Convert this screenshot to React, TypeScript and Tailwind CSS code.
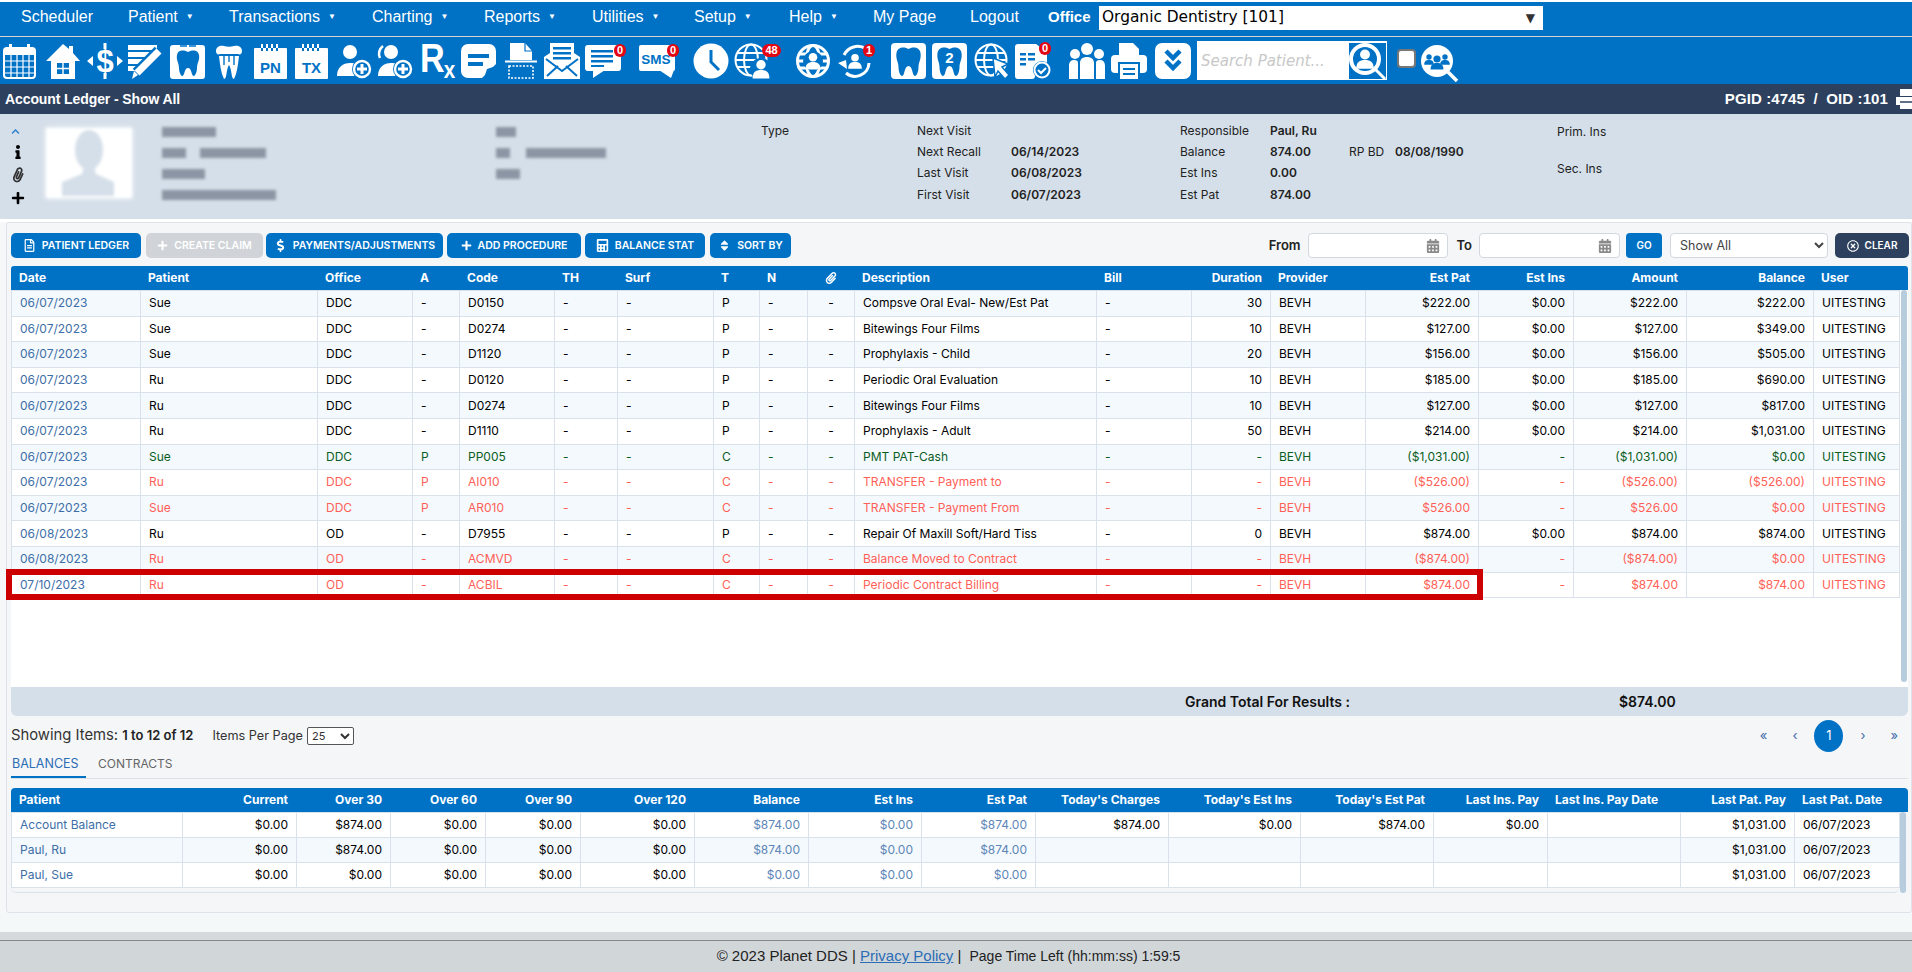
import React from "react";
import { FaCalendarAlt, FaCalculator, FaChevronUp, FaDollarSign, FaInfo, FaPaperclip, FaPlus, FaRegFileAlt, FaRegTimesCircle, FaSort } from "react-icons/fa";

const B = "#0072c6";
const TOOTH =
  "M18 9c-3-2-10-3-11 3-1 5 2 8 2 13 0 4 2 8 3 8 3 0 2-8 6-8s3 8 6 8c1 0 3-4 3-8 0-5 3-8 2-13-1-6-8-5-11-3z";
const BIG_TOOTH =
  "M17.500 6c-3-2-11-3-12 4-1 6 2 9 2 14 0 5 2 9 3.500 9 3 0 2-10 6.500-10s3.500 10 6.500 10c1.500 0 3.500-4 3.500-9 0-5 3-8 2-14-1-7-9-6-12-4z";

const Svg = ({ children, w = 36, className = "" }: { children: React.ReactNode; w?: number; className?: string }) => (
  <svg viewBox={`0 0 ${w} 36`} width={w} height={36} className={"shrink-0 overflow-visible " + className} fill="white">
    {children}
  </svg>
);

const Person = ({ x, y, s = 1, c = "white" }: { x: number; y: number; s?: number; c?: string }) => (
  <g transform={`translate(${x} ${y}) scale(${s})`} fill={c}>
    <circle cx="0" cy="-5" r="4.500" />
    <path d="M-8 8c0-6 3-8 8-8s8 2 8 8z" />
  </g>
);

const Globe = ({ sw = 2 }: { sw?: number }) => (
  <g fill="none" stroke="white" strokeWidth={sw}>
    <circle cx="17" cy="17" r="15.500" />
    <ellipse cx="17" cy="17" rx="7" ry="15.500" />
    <path d="M3 10h28M1.500 17h31M3 24h28" />
  </g>
);

const AddUser = ({ ghost }: { ghost?: boolean }) => (
  <Svg>
    <circle cx="14" cy="9" r="7" />
    <path d="M1 33c0-9 6-13 13-13 5 0 8 2 10 5l-6 8z" />
    {ghost && <path d="M6 3C2 6 1 11 3 15" fill="none" stroke="white" strokeWidth="2.500" />}
    <circle cx="26" cy="26" r="10" fill={B} />
    <circle cx="26" cy="26" r="8" fill={B} stroke="white" strokeWidth="2.400" />
    <path d="M26 21v10M21 26h10" stroke="white" strokeWidth="3" />
  </Svg>
);

const Dated = ({ label }: { label: string }) => (
  <Svg w={33}>
    <rect x="0" y="5" width="33" height="31" rx="1" />
    <path d="M8 1v7M13 1v7M18 1v7M23 1v7" stroke={B} strokeWidth="2" />
    <path d="M8 1v4M13 1v4M18 1v4M23 1v4" stroke="white" strokeWidth="2" />
    <text x="16.500" y="30" textAnchor="middle" fontSize="15" fontWeight="700" fill={B} fontFamily="'Liberation Sans',sans-serif">{label}</text>
  </Svg>
);

const Badge = ({ n, className }: { n: string; className: string }) => (
  <span className={"absolute flex h-[13px] items-center justify-center rounded-full bg-[#e30613] text-[11px] font-bold leading-none text-white font-['Liberation_Sans',sans-serif] " + className}>
    {n}
  </span>
);

const IconBar = () => (
  <div className="flex h-[47px] items-center bg-[#0072c6] pl-[3px]">
    {/* calendar */}
    <Svg w={33}>
      <rect x="1" y="5" width="31" height="30" rx="3" fill="none" stroke="white" strokeWidth="2" />
      <rect x="1" y="5" width="31" height="7" />
      <rect x="6" y="1" width="3" height="7" />
      <rect x="24" y="1" width="3" height="7" />
      <path d="M8 12v22M14 12v22M20 12v22M26 12v22M2 18h29M2 24h29M2 30h29" stroke="white" strokeWidth="1.200" />
    </Svg>
    {/* home */}
    <Svg className="ml-[9px]">
      <path d="M18 1l6 5V3h4v7l7 8h-5v18H6V18H1z" />
      <rect x="12" y="20" width="12" height="11" fill={B} />
      <path d="M18 20v11M12 25.500h12" stroke="white" strokeWidth="1.400" />
    </Svg>
    {/* money */}
    <Svg className="ml-[6px]">
      <path d="M18 0v6M18 30v6" stroke="white" strokeWidth="3" />
      <text x="18" y="29" textAnchor="middle" fontSize="31" fontWeight="700" fontFamily="'Liberation Sans',sans-serif">$</text>
      <path d="M0 18l6-5v10zM36 18l-6-5v10z" />
    </Svg>
    {/* sheet and pencil */}
    <Svg className="ml-[5px]">
      <path d="M0 2h29v5H0zM0 9h29v5H0zM0 16h20v5H0zM0 23h12v5H0z" />
      <path d="M9 30L31 8" stroke={B} strokeWidth="12" />
      <path d="M9 30L31 8" stroke="white" strokeWidth="7" />
      <path d="M6 28l2 2 2 2-6 4z" />
    </Svg>
    {/* tooth chart */}
    <Svg className="ml-[6px]">
      <rect x="0" y="2" width="35" height="34" rx="3" />
      <path d="M10 3h7M19 3h7" stroke={B} strokeWidth="1.500" />
      <path d={TOOTH} fill={B} />
    </Svg>
    {/* crown */}
    <Svg w={28} className="ml-[9px]">
      <path d="M1 8C1 3 6 2 9 3c3 1 7 1 10 0 3-1 8 0 8 5 0 3-2 4-4 3H5c-2 1-4 0-4-3z" />
      <path d="M4 13h20c-1 9-2 17-5 23-3 0-2-10-5-14-3 4-2 14-5 14-3-6-4-14-5-23z" />
      <path d="M9 13v9M14 13v6M19 13v9" stroke={B} strokeWidth="1.400" />
    </Svg>
    <span className="ml-[11px] flex"><Dated label="PN" /></span>
    <span className="ml-[8px] flex"><Dated label="TX" /></span>
    <span className="ml-[8px] flex"><AddUser /></span>
    <span className="ml-[5px] flex"><AddUser ghost /></span>
    {/* rx */}
    <Svg w={33} className="ml-[7px]">
      <text transform="translate(0 29) scale(0.900 1.050)" fontSize="38" fontWeight="700" fontFamily="'Liberation Sans',sans-serif">
        R<tspan dx="-1" dy="6" fontSize="23">x</tspan>
      </text>
    </Svg>
    {/* note */}
    <Svg className="ml-[8px]">
      <path d="M7 1h21a7 7 0 017 7v13L21 35H7a7 7 0 01-7-7V8a7 7 0 017-7z" />
      <path d="M7 11h21v4H7zM7 19h15v4H7zM26 26l9-3-12 12z" fill={B} />
    </Svg>
    {/* scan */}
    <Svg w={32} className="ml-[8px]">
      <path d="M5 0h15l7 8v9H5z" />
      <path d="M20 0v8h7" fill="none" stroke={B} strokeWidth="1.200" />
      <path d="M0 18.500h32" stroke="white" strokeWidth="2" />
      <rect x="4" y="23" width="24" height="12" fill="none" stroke="white" strokeWidth="1.600" strokeDasharray="2 1.500" />
    </Svg>
    {/* mail */}
    <Svg className="ml-[7px]">
      <path d="M0 14l6-4V0h24v10l6 4v22H0z" />
      <path d="M9 4h18v2.500H9zM9 9h18v2.500H9zM9 14h18v2.500H9z" fill={B} />
      <path d="M2 16l16 12 16-12M3 33l11-10M33 33L22 23" fill="none" stroke={B} strokeWidth="2" />
    </Svg>
    {/* chat */}
    <span className="relative ml-[5px] flex">
      <Svg>
        <rect x="0" y="2" width="36" height="26" rx="3" />
        <path d="M8 27h12L8 35z" />
        <path d="M6 7h22v2.400H6zM6 12h22v2.400H6zM6 17h22v2.400H6zM6 22h13v2H6z" fill={B} />
      </Svg>
      <Badge n="0" className="left-[29px] top-[1px] w-[12px]" />
    </span>
    {/* sms */}
    <span className="relative ml-[18px] flex">
      <Svg>
        <rect x="0" y="2" width="36" height="26" rx="2" />
        <path d="M20 27h15l-3 8z" />
        <text x="17" y="21" textAnchor="middle" fontSize="13.500" fontWeight="700" fill={B} fontFamily="'Liberation Sans',sans-serif">SMS</text>
      </Svg>
      <Badge n="0" className="left-[28px] top-[1px] w-[12px]" />
    </span>
    {/* clock */}
    <Svg className="ml-[18px]">
      <circle cx="18" cy="18" r="17.500" />
      <path d="M18 7v12l8 8" fill="none" stroke={B} strokeWidth="3" />
    </Svg>
    {/* web patients */}
    <span className="relative ml-[5px] flex">
      <Svg>
        <Globe />
        <circle cx="27" cy="26" r="11" fill={B} />
        <Person x={27} y={27} s={1.050} />
      </Svg>
      <Badge n="48" className="left-[28px] top-[1px] w-[19px]" />
    </span>
    {/* globe person */}
    <Svg className="ml-[25px]">
      <g transform="translate(1 1)"><Globe sw={3} /></g>
      <circle cx="18" cy="18" r="10" fill={B} />
      <Person x={18} y={19} s={0.950} />
    </Svg>
    {/* recare */}
    <span className="relative ml-[7px] flex">
      <Svg>
        <path d="M6 12A15 15 0 0128 6" fill="none" stroke="white" strokeWidth="3" />
        <path d="M31 20A14 14 0 018 30" fill="none" stroke="white" strokeWidth="3" />
        <path d="M0 20l8-3 1 9zM33 14l3-7-8 1z" />
        <Person x={17} y={19} s={0.850} />
      </Svg>
      <Badge n="1" className="left-[25px] top-[1px] w-[12px]" />
    </span>
    {/* teeth */}
    <Svg className="ml-[17px]">
      <rect x="0" y="0" width="35" height="36" rx="4" />
      <path d={BIG_TOOTH} fill={B} />
    </Svg>
    <Svg className="ml-[5px]">
      <rect x="0" y="0" width="35" height="36" rx="4" />
      <path d={BIG_TOOTH} fill={B} />
      <text x="17.500" y="20" textAnchor="middle" fontSize="15" fontWeight="700" fontFamily="'Liberation Sans',sans-serif">2</text>
    </Svg>
    {/* globe cursor */}
    <Svg className="ml-[6px]">
      <Globe />
      <path d="M19 15l15 6-6 3 7 8-4 4-7-8-3 6z" stroke={B} strokeWidth="1.500" />
    </Svg>
    {/* doc check */}
    <span className="relative ml-[5px] flex">
      <Svg>
        <path d="M3 1h18l11 8v17H3a3 3 0 01-3-3V4a3 3 0 013-3z" />
        <rect x="0" y="20" width="20" height="16" rx="3" />
        <path d="M5 10h6v2.500H5zM13 10h7v2.500h-7zM5 15h6v2.500H5zM13 15h7v2.500h-7zM5 20h6v2.500H5z" fill={B} />
        <circle cx="27" cy="27" r="9" fill={B} />
        <circle cx="27" cy="27" r="7.500" fill={B} stroke="white" strokeWidth="2" />
        <path d="M23 27l3 3 5-5" fill="none" stroke="white" strokeWidth="2" />
      </Svg>
      <Badge n="0" className="left-[24px] top-[-1px] w-[12px]" />
    </span>
    {/* people */}
    <Svg className="ml-[18px]">
      <circle cx="18" cy="6" r="6" />
      <circle cx="6" cy="11" r="5" />
      <circle cx="30" cy="11" r="5" />
      <path d="M0 36V23c0-4 2-6 5-6s4 1 4 3v16zM27 36V20c0-2 1-3 4-3s5 2 5 6v13zM11 36V20c0-4 3-6 7-6s7 2 7 6v16z" />
    </Svg>
    {/* printer */}
    <Svg className="ml-[6px]">
      <path d="M8 0h14l6 6v6H8z" />
      <rect x="0" y="12" width="36" height="18" rx="4" />
      <rect x="7" y="19" width="22" height="17" fill={B} />
      <rect x="9" y="21" width="18" height="15" />
      <path d="M12 26h12M12 31h12" stroke={B} strokeWidth="2" />
    </Svg>
    {/* collapse */}
    <Svg className="ml-[8px]">
      <rect x="0" y="0" width="36" height="36" rx="7" />
      <path d="M11 8l7 7 7-7M11 18l7 7 7-7" fill="none" stroke={B} strokeWidth="4.500" />
    </Svg>
    <div className="ml-[6px] flex h-[39px] w-[190px] items-center bg-white pr-[1px]">
      <input
        placeholder="Search Patient..."
        className="h-full min-w-0 flex-1 pl-[4px] font-['DejaVu_Sans',sans-serif] text-[15px] italic outline-none placeholder:text-[#c8c8c8]"
      />
      <Svg w={37}>
        <rect x="0" y="0" width="37" height="36" fill={B} />
        <circle cx="16" cy="16" r="14" fill={B} stroke="white" strokeWidth="4" />
        <Person x={16} y={17} s={1.100} />
        <path d="M26 26l10 10" stroke="white" strokeWidth="3" />
      </Svg>
    </div>
    <input type="checkbox" className="mb-[5px] ml-[10px] h-[19px] w-[19px] appearance-none rounded-[4px] border-2 border-[#777] bg-white" />
    <Svg className="ml-[5px] mt-[4px]">
      <circle cx="16" cy="16" r="16" />
      <Person x={16} y={18} s={0.800} c={B} />
      <Person x={8} y={15} s={0.600} c={B} />
      <Person x={24} y={15} s={0.600} c={B} />
      <path d="M27 27l9 9" stroke="white" strokeWidth="3.500" />
    </Svg>
  </div>
);

const navItems = [
  { t: "Scheduler", w: "w-[107px]" },
  { t: "Patient", w: "w-[101px]", c: true },
  { t: "Transactions", w: "w-[143px]", c: true },
  { t: "Charting", w: "w-[112px]", c: true },
  { t: "Reports", w: "w-[108px]", c: true },
  { t: "Utilities", w: "w-[102px]", c: true },
  { t: "Setup", w: "w-[95px]", c: true },
  { t: "Help", w: "w-[84px]", c: true },
  { t: "My Page", w: "w-[97px]" },
  { t: "Logout", w: "w-[78px]" },
];

const NavBar = () => (
  <div className="flex h-[35px] items-center border-b border-[#d9d4cf] bg-[#0072c6] pl-[21px] font-['Liberation_Sans',sans-serif] text-[16px] text-white">
    {navItems.map((n) => (
      <div key={n.t} className={"flex shrink-0 items-center pb-[4px] " + n.w}>
        {n.t}
        {n.c && <span className="ml-[8px] text-[8px]">▼</span>}
      </div>
    ))}
    <b className="w-[51px] pb-[4px] text-[15px]">Office</b>
    <div className="mb-[3px] flex h-[24px] w-[444px] items-center justify-between bg-white pl-[3px] pr-[8px] font-['DejaVu_Sans',sans-serif] text-[15.400px] text-black">
      Organic Dentistry [101]
      <span className="text-[12px] text-[#333]">▼</span>
    </div>
  </div>
);

const Blur = ({ className }: { className: string }) => <div className={"h-[10px] bg-[#8b95a3] blur-[1.5px] " + className} />;

const PatientPanel = () => (
  <div className="flex h-[105px] bg-[#d5dfe9] pt-[6px] font-['Inter',sans-serif] text-[12px] text-[#222]">
    <div className="flex w-[46px] flex-col items-start gap-[9px] pl-[11px] pt-[7px]">
      <FaChevronUp className="text-[9px] text-[#2a7fd0]" />
      <FaInfo className="text-[14px] text-black" />
      <FaPaperclip className="rotate-[-20deg] text-[14px] text-[#333]" />
      <FaPlus className="text-[14px] text-black" />
    </div>
    <div className="w-[116px] pt-[8px]">
      <div className="h-[70px] w-[86px] overflow-hidden bg-white shadow-[0_0_5px_white] blur-[1.5px]">
        <svg viewBox="0 0 86 70" width={86} height={70} fill="#d5dfe9">
          <ellipse cx="43" cy="22" rx="14" ry="20" />
          <path d="M38 38h10l2 8 18 8v14H16V54l20-8z" />
        </svg>
      </div>
    </div>
    <div className="flex w-[334px] flex-col gap-[11px] pt-[7px]">
      <Blur className="w-[54px]" />
      <div className="flex gap-[14px]">
        <Blur className="w-[24px]" />
        <Blur className="w-[66px]" />
      </div>
      <Blur className="w-[43px]" />
      <Blur className="w-[114px]" />
    </div>
    <div className="flex w-[265px] flex-col gap-[11px] pt-[7px]">
      <Blur className="w-[20px]" />
      <div className="flex gap-[16px]">
        <Blur className="w-[14px]" />
        <Blur className="w-[80px]" />
      </div>
      <Blur className="w-[24px]" />
    </div>
    <div className="w-[156px] pt-[2px]">Type</div>
    <div className="grid w-[263px] auto-rows-[21.300px] grid-cols-[94px_1fr] content-start items-center">
      <span>Next Visit</span><b className="font-semibold"></b>
      <span>Next Recall</span><b className="font-semibold">06/14/2023</b>
      <span>Last Visit</span><b className="font-semibold">06/08/2023</b>
      <span>First Visit</span><b className="font-semibold">06/07/2023</b>
    </div>
    <div className="grid w-[377px] auto-rows-[21.300px] grid-cols-[90px_79px_46px_1fr] content-start items-center">
      <span>Responsible</span><b className="font-semibold">Paul, Ru</b><span></span><span></span>
      <span>Balance</span><b className="font-semibold">874.00</b><span>RP BD</span><b className="font-semibold">08/08/1990</b>
      <span>Est Ins</span><b className="font-semibold">0.00</b><span></span><span></span>
      <span>Est Pat</span><b className="font-semibold">874.00</b><span></span><span></span>
    </div>
    <div className="flex flex-col gap-[19px] pt-[3px]">
      <span>Prim. Ins</span>
      <span>Sec. Ins</span>
    </div>
  </div>
);

const Btn = ({ icon, children, w, off }: { icon: React.ReactNode; children: React.ReactNode; w: string; off?: boolean }) => (
  <div className={"flex h-[25px] items-center justify-center gap-[6px] rounded-[5px] text-[10.500px] font-semibold text-white " + w + (off ? " bg-[#d0d4d8] text-[#e9ebee]" : " bg-[#0072c6]")}>
    {icon}
    {children}
  </div>
);

const Toolbar = () => (
  <div className="flex h-[25px] items-center pl-[4px] pr-[2px]">
    <Btn w="w-[130px]" icon={<FaRegFileAlt className="text-[13px]" />}>PATIENT LEDGER</Btn>
    <Btn w="ml-[5px] w-[117px]" off icon={<FaPlus className="text-[11px]" />}>CREATE CLAIM</Btn>
    <Btn w="ml-[3px] w-[177px]" icon={<FaDollarSign className="text-[13px]" />}>PAYMENTS/ADJUSTMENTS</Btn>
    <Btn w="ml-[4px] w-[134px]" icon={<FaPlus className="text-[11px]" />}>ADD PROCEDURE</Btn>
    <Btn w="ml-[4px] w-[120px]" icon={<FaCalculator className="text-[13px]" />}>BALANCE STAT</Btn>
    <Btn w="ml-[5px] w-[81px]" icon={<FaSort className="text-[13px]" />}>SORT BY</Btn>
    <span className="ml-auto text-[13px] font-semibold text-[#222]">From</span>
    <div className="ml-[7px] flex h-[25px] w-[140px] items-center justify-end rounded-[4px] border border-[#d3d8de] bg-white pr-[7px]">
      <FaCalendarAlt className="text-[14px] text-[#8a8a8a]" />
    </div>
    <span className="ml-[9px] text-[13px] font-semibold text-[#222]">To</span>
    <div className="ml-[7px] flex h-[25px] w-[141px] items-center justify-end rounded-[4px] border border-[#d3d8de] bg-white pr-[7px]">
      <FaCalendarAlt className="text-[14px] text-[#8a8a8a]" />
    </div>
    <div className="ml-[6px] flex h-[25px] w-[36px] items-center justify-center rounded-[4px] bg-[#0072c6] text-[10px] font-semibold text-white">GO</div>
    <select className="ml-[8px] h-[25px] w-[158px] rounded-[4px] border border-[#d3d8de] bg-white pl-[5px] text-[12.500px] text-[#444]">
      <option>Show All</option>
    </select>
    <div className="ml-[7px] flex h-[25px] w-[74px] items-center justify-center gap-[6px] rounded-[5px] bg-[#2d415f] text-[10px] font-semibold text-white">
      <FaRegTimesCircle className="text-[12px]" />
      CLEAR
    </div>
  </div>
);

const ledgerHead = ["Date", "Patient", "Office", "A", "Code", "TH", "Surf", "T", "N", "", "Description", "Bill", "Duration", "Provider", "Est Pat", "Est Ins", "Amount", "Balance", "User"];
const ledgerRight = [12, 14, 15, 16, 17];
const ledgerCols = [129, 177, 95, 47, 95, 63, 96, 46, 48, 47, 242, 95, 79, 95, 113, 95, 113, 127, 86];

type Row = { k?: "g" | "r"; c: string[] };
const ledger: Row[] = [
  { c: ["06/07/2023", "Sue", "DDC", "-", "D0150", "-", "-", "P", "-", "-", "Compsve Oral Eval- New/Est Pat", "-", "30", "BEVH", "$222.00", "$0.00", "$222.00", "$222.00", "UITESTING"] },
  { c: ["06/07/2023", "Sue", "DDC", "-", "D0274", "-", "-", "P", "-", "-", "Bitewings Four Films", "-", "10", "BEVH", "$127.00", "$0.00", "$127.00", "$349.00", "UITESTING"] },
  { c: ["06/07/2023", "Sue", "DDC", "-", "D1120", "-", "-", "P", "-", "-", "Prophylaxis - Child", "-", "20", "BEVH", "$156.00", "$0.00", "$156.00", "$505.00", "UITESTING"] },
  { c: ["06/07/2023", "Ru", "DDC", "-", "D0120", "-", "-", "P", "-", "-", "Periodic Oral Evaluation", "-", "10", "BEVH", "$185.00", "$0.00", "$185.00", "$690.00", "UITESTING"] },
  { c: ["06/07/2023", "Ru", "DDC", "-", "D0274", "-", "-", "P", "-", "-", "Bitewings Four Films", "-", "10", "BEVH", "$127.00", "$0.00", "$127.00", "$817.00", "UITESTING"] },
  { c: ["06/07/2023", "Ru", "DDC", "-", "D1110", "-", "-", "P", "-", "-", "Prophylaxis - Adult", "-", "50", "BEVH", "$214.00", "$0.00", "$214.00", "$1,031.00", "UITESTING"] },
  { k: "g", c: ["06/07/2023", "Sue", "DDC", "P", "PP005", "-", "-", "C", "-", "-", "PMT PAT-Cash", "-", "-", "BEVH", "($1,031.00)", "-", "($1,031.00)", "$0.00", "UITESTING"] },
  { k: "r", c: ["06/07/2023", "Ru", "DDC", "P", "AI010", "-", "-", "C", "-", "-", "TRANSFER - Payment to", "-", "-", "BEVH", "($526.00)", "-", "($526.00)", "($526.00)", "UITESTING"] },
  { k: "r", c: ["06/07/2023", "Sue", "DDC", "P", "AR010", "-", "-", "C", "-", "-", "TRANSFER - Payment From", "-", "-", "BEVH", "$526.00", "-", "$526.00", "$0.00", "UITESTING"] },
  { c: ["06/08/2023", "Ru", "OD", "-", "D7955", "-", "-", "P", "-", "-", "Repair Of Maxill Soft/Hard Tiss", "-", "0", "BEVH", "$874.00", "$0.00", "$874.00", "$874.00", "UITESTING"] },
  { k: "r", c: ["06/08/2023", "Ru", "OD", "-", "ACMVD", "-", "-", "C", "-", "-", "Balance Moved to Contract", "-", "-", "BEVH", "($874.00)", "-", "($874.00)", "$0.00", "UITESTING"] },
  { k: "r", c: ["07/10/2023", "Ru", "OD", "-", "ACBIL", "-", "-", "C", "-", "-", "Periodic Contract Billing", "-", "-", "BEVH", "$874.00", "-", "$874.00", "$874.00", "UITESTING"] },
];

const balHead = ["Patient", "Current", "Over 30", "Over 60", "Over 90", "Over 120", "Balance", "Est Ins", "Est Pat", "Today's Charges", "Today's Est Ins", "Today's Est Pat", "Last Ins. Pay", "Last Ins. Pay Date", "Last Pat. Pay", "Last Pat. Date"];
const balCols = [171, 114, 94, 95, 95, 114, 114, 113, 114, 133, 132, 133, 114, 133, 114, 105];
const balRows = [
  ["Account Balance", "$0.00", "$874.00", "$0.00", "$0.00", "$0.00", "$874.00", "$0.00", "$874.00", "$874.00", "$0.00", "$874.00", "$0.00", "", "$1,031.00", "06/07/2023"],
  ["Paul, Ru", "$0.00", "$874.00", "$0.00", "$0.00", "$0.00", "$874.00", "$0.00", "$874.00", "", "", "", "", "", "$1,031.00", "06/07/2023"],
  ["Paul, Sue", "$0.00", "$0.00", "$0.00", "$0.00", "$0.00", "$0.00", "$0.00", "$0.00", "", "", "", "", "", "$1,031.00", "06/07/2023"],
];

const LedgerTable = () => (
  <table className="w-[1888px] table-fixed border-collapse text-[12px] leading-none">
    <colgroup>
      {ledgerCols.map((w, i) => <col key={i} style={{ width: w }} />)}
    </colgroup>
    <tbody>
      {ledger.map((r, i) => (
        <tr key={i} className={"h-[25.600px] " + (i % 2 === 0 ? "bg-[#f4f9fd]" : "bg-white")}>
          {r.c.map((v, j) => (
            <td
              key={j}
              className={
                "border border-[#d9e1ea] px-2 " +
                (ledgerRight.includes(j) ? "text-right " : "") +
                (j === 9 ? "text-center " : "") +
                (j === 0 ? "text-[#3d6ea8]" : r.k === "g" ? "text-[#0b5d1e]" : r.k === "r" ? "text-[#ff5f57]" : "text-black")
              }
            >
              {v}
            </td>
          ))}
        </tr>
      ))}
    </tbody>
  </table>
);

const BalanceTable = () => (
  <table className="w-[1888px] table-fixed border-collapse text-[12px] leading-none">
    <colgroup>
      {balCols.map((w, i) => <col key={i} style={{ width: w }} />)}
    </colgroup>
    <tbody>
      {balRows.map((r, i) => (
        <tr key={i} className={"h-[25px] " + (i === 1 ? "bg-[#f4f9fd]" : "bg-white")}>
          {r.map((v, j) => (
            <td
              key={j}
              className={
                "border border-[#d9e1ea] px-2 " +
                (j > 0 && j < 15 ? "text-right " : "") +
                (j === 0 ? "text-[#3d6ea8]" : j >= 6 && j <= 8 ? "text-[#5d86b8]" : "text-black")
              }
            >
              {v}
            </td>
          ))}
        </tr>
      ))}
    </tbody>
  </table>
);

export default function App() {
  return (
    <div className="relative flex h-[972px] w-[1912px] flex-col overflow-hidden bg-[#f5f7f8] font-['Inter',sans-serif]">
      <div className="h-[2px] bg-white" />
      <NavBar />
      <IconBar />
      <div className="flex h-[30px] items-center overflow-hidden bg-[#2d415f] pl-[5px] font-['Liberation_Sans',sans-serif] text-[14px] font-bold tracking-[-0.1px] text-white">
        Account Ledger - Show All
        <span className="ml-auto text-[15px] tracking-[0.1px]">PGID :4745&nbsp; / &nbsp;OID :101</span>
        <svg viewBox="0 0 20 20" width={20} height={20} fill="white" className="ml-[8px] mr-[-4px] shrink-0">
          <path d="M4 0h12v7H4zM0 8h20v8H0zM4 13h12v7H4z" />
          <path d="M4 13h12" stroke="#2d415f" strokeWidth="1.500" />
        </svg>
      </div>
      <PatientPanel />
      <div className="h-[3px] bg-white" />
      <div className="ml-[6px] flex h-[691px] flex-col rounded-[3px] border border-[#dde3e8] bg-[#f5f6f8] pt-[10px]">
        <Toolbar />
        <div className="ml-[4px] mt-[8px] grid h-[24px] w-[1897px] grid-cols-[129px_177px_95px_47px_95px_63px_96px_46px_48px_47px_242px_95px_79px_95px_113px_95px_113px_127px_95px] items-center rounded-t-[3px] bg-[#0072c6] pb-[1px] text-[12px] font-bold text-white">
          {ledgerHead.map((h, i) => (
            <div key={i} className={"px-2 " + (ledgerRight.includes(i) ? "text-right" : "")}>
              {i === 9 ? <FaPaperclip className="mx-auto text-[12px]" /> : h}
            </div>
          ))}
        </div>
        <div className="ml-[4px] flex h-[397px] w-[1897px] items-start bg-white">
          <LedgerTable />
          <div className="ml-[1px] h-[392px] w-[6px] rounded-[3px] bg-[#b7ccdc]" />
        </div>
        <div className="ml-[4px] flex h-[29px] w-[1897px] items-center rounded-b-[6px] bg-[#d5dfe9] pl-[1174px] text-[14px] font-semibold text-[#111]">
          <span className="w-[434px]">Grand Total For Results :</span>
          <span>$874.00</span>
        </div>
        <div className="ml-[4px] flex h-[40px] w-[1897px] items-center pb-[1px] text-[14.800px] text-[#333]">
          Showing Items:&nbsp;<b className="text-[13px] font-semibold text-[#222]">1 to 12 of 12</b>
          <span className="ml-[19px] text-[12.700px]">Items Per Page</span>
          <select className="ml-[4px] h-[18px] w-[47px] rounded-[2px] border border-[#555] bg-white text-[11px]">
            <option>25</option>
          </select>
          <div className="ml-auto flex items-center gap-[17px] pr-[10px] text-[13px] text-[#3d6ea8]">
            <span>«</span>
            <span className="ml-[8px]">‹</span>
            <span className="flex h-[32px] w-[29px] items-center justify-center rounded-[50%] bg-[#0072c6] text-white">1</span>
            <span>›</span>
            <span className="ml-[8px]">»</span>
          </div>
        </div>
        <div className="ml-[4px] flex h-[23px] w-[1897px] border-b border-[#dde1e5] text-[12px] leading-[16px]">
          <div className="w-[75px] border-b-2 border-[#0072c6] pl-[1px] text-[12.500px] text-[#2a6db5]">BALANCES</div>
          <div className="ml-[12px] text-[#666]">CONTRACTS</div>
        </div>
        <div className="ml-[4px] mt-[9px] grid h-[24px] w-[1897px] grid-cols-[171px_114px_94px_95px_95px_114px_114px_113px_114px_133px_132px_133px_114px_133px_114px_114px] items-center rounded-t-[4px] bg-[#0072c6] text-[12px] font-bold text-white">
          {balHead.map((h, i) => (
            <div key={i} className={"px-2 " + (i === 0 || i === 13 || i === 15 ? "text-left" : "text-right")}>{h}</div>
          ))}
        </div>
        <div className="ml-[4px] flex h-[81px] w-[1897px] items-start">
          <div className="h-[81px] w-[1888px] rounded-b-[5px] border-b border-[#d9e1ea]">
            <BalanceTable />
          </div>
          <div className="ml-[1px] h-[81px] w-[6px] rounded-[3px] bg-[#b7ccdc]" />
        </div>
      </div>
      <div className="h-[19px] bg-[#f5f8f9]" />
      <div className="h-[8px] bg-[#d5d9dc]" />
      <div className="flex h-[32px] items-center justify-center border-t border-[#888] bg-[#d1d6d9] pr-[15px] font-['Liberation_Sans',sans-serif] text-[15px] text-[#222]">
        © 2023 Planet DDS |&nbsp;<u className="text-[#2a6db5]">Privacy Policy</u>&nbsp;|&nbsp;<span className="text-[14px]">&nbsp;Page Time Left (hh:mm:ss) 1:59:5</span>
      </div>
      {/* highlight drawn over the last ledger row */}
      <div className="absolute left-[6px] top-[569px] h-[31px] w-[1477px] border-[6px] border-[#cc0000]" />
    </div>
  );
}
